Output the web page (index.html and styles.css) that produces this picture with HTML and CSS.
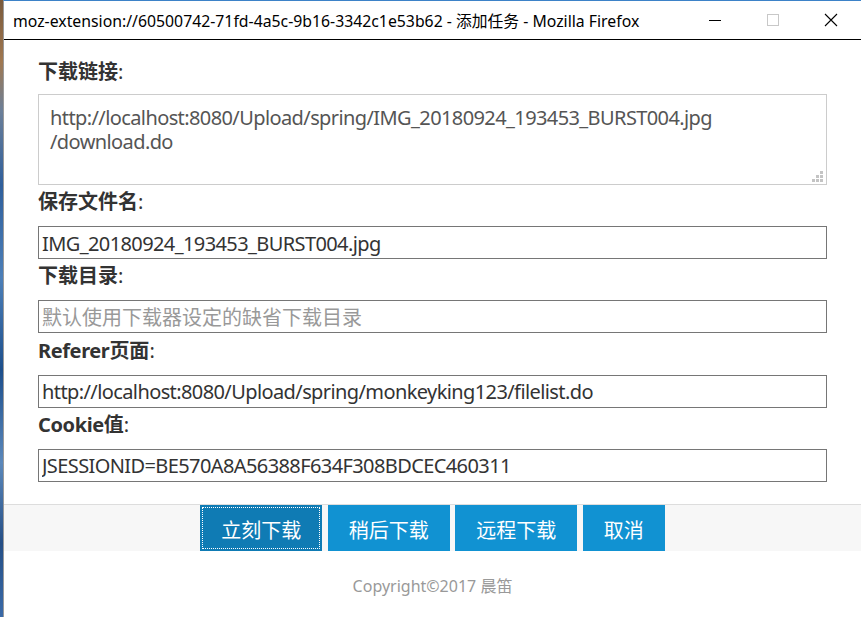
FILE: index.html
```html
<!DOCTYPE html>
<html lang="zh-CN">
<head>
<meta charset="utf-8">
<title>添加任务</title>
<link rel="stylesheet" href="styles.css">
</head>
<body>
<div class="desk"></div>
<div class="window">
  <header class="titlebar">
    <span class="title">moz-extension://60500742-71fd-4a5c-9b16-3342c1e53b62 - 添加任务 - Mozilla Firefox</span>
    <div class="controls">
      <span class="ctl"><svg width="14" height="14" viewBox="0 0 14 14"><line x1="1" y1="7.5" x2="13" y2="7.5" stroke="#000" stroke-width="1"/></svg></span>
      <span class="ctl"><svg width="14" height="14" viewBox="0 0 14 14"><rect x="1.5" y="1.5" width="11" height="11" fill="none" stroke="#c8c8c8" stroke-width="1"/></svg></span>
      <span class="ctl"><svg width="14" height="14" viewBox="0 0 14 14"><path d="M1 1 L13 13 M13 1 L1 13" stroke="#000" stroke-width="1.1" fill="none"/></svg></span>
    </div>
  </header>

  <main class="content">
    <div class="lbl lbl-first">下载链接<span class="colon">:</span></div>
    <div class="ta-wrap">
      <textarea class="ta" readonly>http://localhost:8080/Upload/spring/IMG_20180924_193453_BURST004.jpg
/download.do</textarea>
      <svg class="grip" width="12" height="12" viewBox="0 0 12 12">
        <rect x="8" y="0" width="3" height="3" fill="#c4c4c4"/>
        <rect x="4" y="4" width="3" height="3" fill="#c4c4c4"/>
        <rect x="8" y="4" width="3" height="3" fill="#c4c4c4"/>
        <rect x="0" y="8" width="3" height="3" fill="#c4c4c4"/>
        <rect x="4" y="8" width="3" height="3" fill="#c4c4c4"/>
        <rect x="8" y="8" width="3" height="3" fill="#c4c4c4"/>
      </svg>
    </div>

    <div class="lbl lbl-after-ta">保存文件名<span class="colon">:</span></div>
    <input class="inp" type="text" value="IMG_20180924_193453_BURST004.jpg">

    <div class="lbl">下载目录<span class="colon">:</span></div>
    <input class="inp" type="text" placeholder="默认使用下载器设定的缺省下载目录">

    <div class="lbl"><span class="lat">Referer</span>页面<span class="colon">:</span></div>
    <input class="inp" type="text" value="http://localhost:8080/Upload/spring/monkeyking123/filelist.do">

    <div class="lbl"><span class="lat">Cookie</span>值<span class="colon">:</span></div>
    <input class="inp inp-last" type="text" value="JSESSIONID=BE570A8A56388F634F308BDCEC460311">
  </main>

  <div class="actions">
    <button class="btn btn-focus" type="button">立刻下载</button>
    <button class="btn" type="button">稍后下载</button>
    <button class="btn" type="button">远程下载</button>
    <button class="btn btn-narrow" type="button">取消</button>
  </div>

  <footer class="footer">Copyright©2017 晨笛</footer>
</div>
</body>
</html>
```

FILE: styles.css
```css
html, body {
  margin: 0;
  padding: 0;
  height: 100%;
  background: #ffffff;
}
body {
  display: flex;
  font-family: "Noto Sans", "Noto Sans CJK SC", sans-serif;
  overflow: hidden;
}
.desk {
  width: 3px;
  flex: none;
  background: linear-gradient(to bottom, #7a5a3c 0%, #a07850 10%, #6b7f99 18%, #2f5f9c 30%, #4c7fb8 45%, #1d4f8c 60%, #5b88bb 75%, #254f86 88%, #3a6aa8 100%);
}
.window {
  flex: 1;
  border-left: 1px solid #9a9a9a;
  border-top: 1px solid #3d82c8;
  display: flex;
  flex-direction: column;
  min-width: 0;
}
.titlebar {
  height: 38px;
  border-bottom: 1px solid #000;
  display: flex;
  align-items: center;
  padding-left: 9px;
  background: #fff;
}
.title {
  font-family: "Noto Sans", "Noto Sans CJK SC", sans-serif;
  font-size: 15.8px;
  color: #000;
  white-space: nowrap;
  flex: none;
}
.controls {
  margin-left: auto;
  display: flex;
  padding-right: 1px;
  height: 100%;
}
.ctl {
  width: 58px;
  display: flex;
  align-items: center;
  justify-content: center;
}
.content {
  padding: 19px 34px 0 34px;
  display: flex;
  flex-direction: column;
}
.lbl {
  font-size: 20px;
  line-height: 26px;
  height: 26px;
  font-weight: bold;
  color: #333;
  margin-bottom: 11px;
  font-family: "Noto Sans", "Noto Sans CJK SC", sans-serif;
}
.lat {
  letter-spacing: -0.4px;
}
.lbl-first {
  margin-bottom: 9px;
}
.lbl-after-ta {
  margin-top: 4px;
}
.colon {
  font-weight: normal;
}
.ta-wrap {
  position: relative;
  height: 91px;
}
.ta {
  display: block;
  box-sizing: border-box;
  width: 100%;
  height: 91px;
  margin: 0;
  border: 1px solid #cccccc;
  padding: 11px 11px;
  font-family: "Noto Sans", "Noto Sans CJK SC", sans-serif;
  font-size: 20px;
  line-height: 24px;
  letter-spacing: -0.6px;
  color: #555;
  resize: none;
  overflow: hidden;
  background: #fff;
  outline: none;
}
.grip {
  position: absolute;
  right: 3px;
  bottom: 2px;
}
.inp {
  display: block;
  box-sizing: border-box;
  width: 100%;
  height: 33px;
  margin: 0 0 4.33px 0;
  border: 1px solid #767676;
  border-radius: 0;
  padding: 1px 3px 0 3px;
  font-family: "Noto Sans", "Noto Sans CJK SC", sans-serif;
  font-size: 20px;
  letter-spacing: -0.6px;
  color: #333;
  background: #fff;
  outline: none;
}
.inp::placeholder {
  color: #999;
  opacity: 1;
  letter-spacing: 0;
}
.inp-last {
  margin-bottom: 0;
}
.actions {
  margin-top: 22px;
  border-top: 1px solid #dddddd;
  background: #f7f7f7;
  display: flex;
  justify-content: center;
  gap: 5.5px;
  height: 46px;
}
.btn {
  box-sizing: border-box;
  width: 122px;
  height: 46px;
  border: none;
  border-radius: 0;
  margin: 0;
  padding: 4px 0 0 0;
  background: #1192d2;
  color: #fff;
  font-family: "Noto Sans CJK SC", sans-serif;
  font-size: 20px;
  line-height: 42px;
  cursor: pointer;
}
.btn-narrow {
  width: 82px;
}
.btn-focus {
  background: #0f7bb4;
  outline: 1px dotted #fff;
  outline-offset: -3px;
}
.footer {
  margin-top: 24px;
  text-align: center;
  font-size: 16px;
  line-height: 22px;
  color: #999;
  font-family: "Noto Sans", "Noto Sans CJK SC", sans-serif;
}
```
